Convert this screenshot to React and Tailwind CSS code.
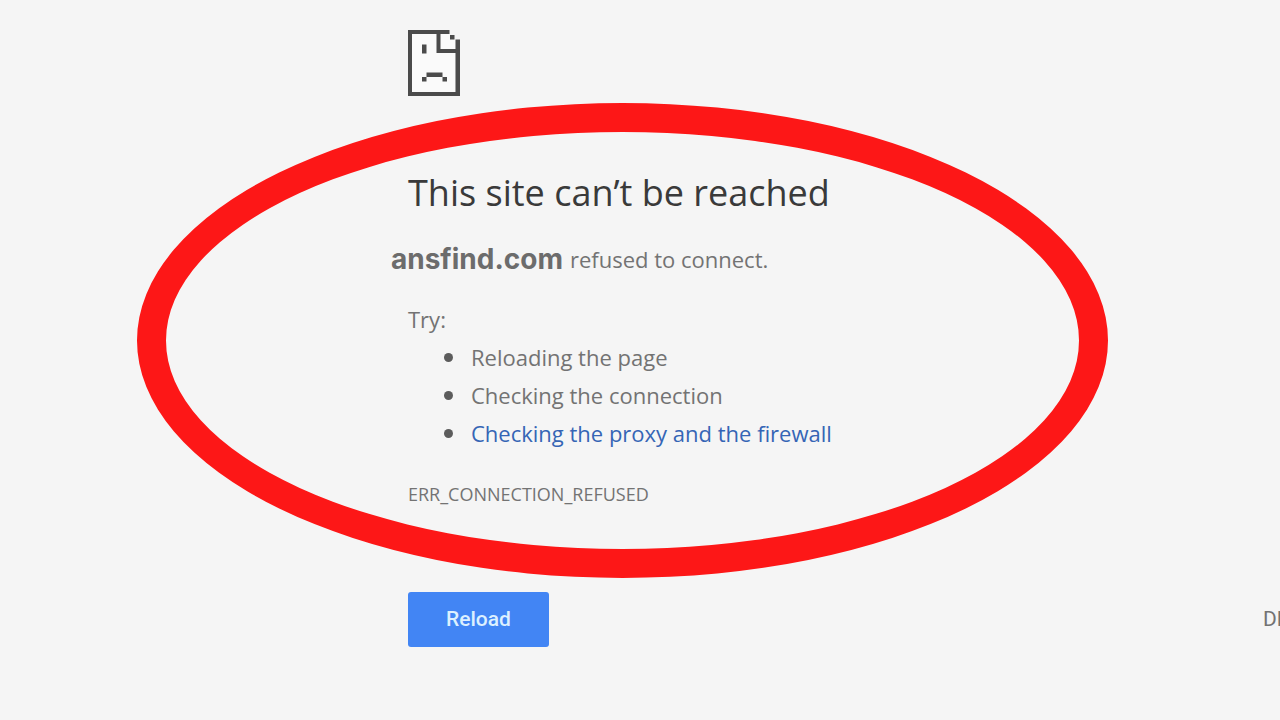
function SadPage() {
  return (
    <svg className="block h-[66px] w-[52px]" viewBox="0 0 52 66" fill="#4b4b4b" role="img" aria-label="Sad page">
      <path fill="#fafafa" d="M4 4H42V9H47V62H4Z" />
      <path d="M28.5 4H32.5V19H48V23H28.5Z" />
      <path d="M0 0H41.5V4H4V62H47.5V9.5H52V66H0ZM42 5H46.5V9.5H42Z" />
      <path d="M14 14.5H18.5V23.5H14ZM18.5 42.5H34.5V47H18.5ZM14 47H18.5V51.5H14ZM34.5 47H39V51.5H34.5Z" />
    </svg>
  );
}

export default function App() {
  return (
    <div className="relative min-h-screen overflow-hidden bg-[#f5f5f5] pt-[30px] pb-10 pl-[408px] font-['Open_Sans','Noto_Sans',sans-serif] text-[22px] text-[#737373]">
      <main>
        <SadPage />
        <h1 className="mt-[72px] text-[36px] leading-[50px] text-[#3a3a3a]">This site can’t be reached</h1>
        <p className="mt-[22px] -ml-[17px] flex items-center gap-[7px] leading-[38px]">
          <strong className="font-['Inter',sans-serif] text-[28px] font-bold text-[#6c6c6c]">ansfind.com</strong>
          <span>refused to connect.</span>
        </p>
        <p className="mt-[22px] leading-[38px]">Try:</p>
        <ul className="leading-[38px]">
          <li className="flex items-center gap-[18px] pl-9">
            <span className="size-[9px] rounded-full bg-[#5c5c5c]" />
            Reloading the page
          </li>
          <li className="flex items-center gap-[18px] pl-9">
            <span className="size-[9px] rounded-full bg-[#5c5c5c]" />
            Checking the connection
          </li>
          <li className="flex items-center gap-[18px] pl-9">
            <span className="size-[9px] rounded-full bg-[#5c5c5c]" />
            <a href="#proxy" className="text-[#3565b5]">Checking the proxy and the firewall</a>
          </li>
        </ul>
        <p className="mt-6 text-[18px] leading-[36px]">ERR_CONNECTION_REFUSED</p>
        <div className="mt-20 flex items-center justify-between">
          <button type="button" className="h-[55px] w-[141px] rounded-[3px] bg-[#4285f4] font-['Roboto',sans-serif] text-[21px] font-medium text-[#dcf0ff]">
            Reload
          </button>
          <button type="button" className="w-[17px] overflow-hidden text-left font-['Roboto',sans-serif] text-[21px] whitespace-nowrap">
            DETAILS
          </button>
        </div>
      </main>
      <div aria-hidden="true" className="pointer-events-none absolute top-[103px] left-[137px] h-[475px] w-[971px] rounded-[50%] border-[29px] border-[#fd1717]" />
    </div>
  );
}
